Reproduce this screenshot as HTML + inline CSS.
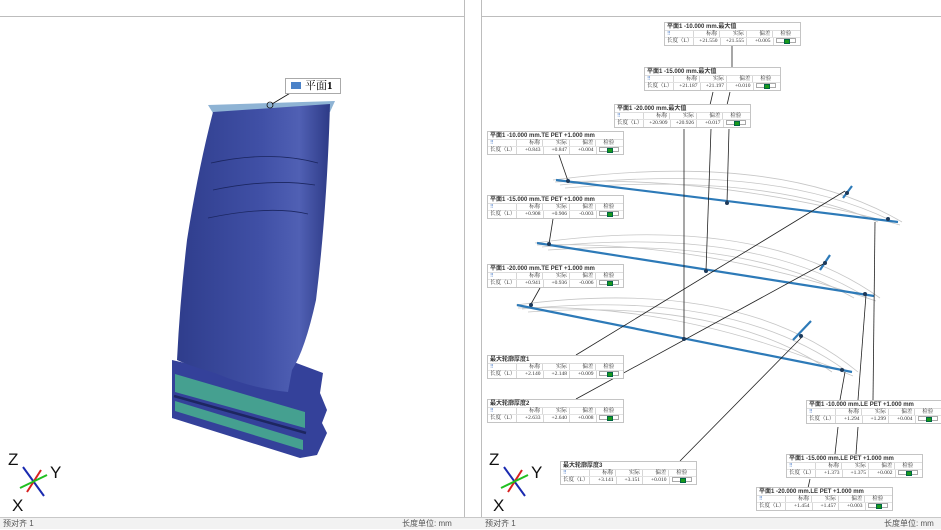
<!DOCTYPE html>
<html><head><meta charset="utf-8">
<style>
*{margin:0;padding:0;box-sizing:border-box}
body{width:941px;height:529px;background:#fff;position:relative;overflow:hidden;font-family:"Liberation Sans","Noto Sans CJK SC",sans-serif}
.vl{position:absolute;top:0;width:1px;height:517px;background:#bdbdbd}
.hl{position:absolute;top:16px;height:1px;background:#bdbdbd}
.status{position:absolute;left:0;top:517px;width:941px;height:12px;background:#f2f2f2;border-top:1px solid #c8c8c8;font-size:8px;color:#555;line-height:12px}
.t{position:absolute;width:137px;background:#fff;border:1px solid #c4c4c4;font-size:5.5px;color:#333;font-family:"Liberation Serif","Noto Serif CJK SC",serif}
.t .ti{height:8px;line-height:8px;font-weight:bold;font-size:6px;padding-left:2px;white-space:nowrap;font-family:"Liberation Sans","Noto Sans CJK SC",sans-serif;border-bottom:1px solid #ddd}
.t .r{display:flex;height:7px;line-height:7px;border-bottom:1px solid #e2e2e2}
.t .r:last-child{border-bottom:none}
.t .r span{border-right:1px solid #d6d6d6;text-align:right;padding-right:2px;white-space:nowrap}
.t .r span:first-child{width:29px;text-align:left;padding-left:2px}
.t .r span:nth-child(2),.t .r span:nth-child(3),.t .r span:nth-child(4){width:27px}
.t .r span:last-child{width:27px;border-right:none;text-align:center}
.ok{display:inline-block;width:20px;height:5px;border:1px solid #aaa;vertical-align:middle;position:relative}
.ok:after{content:"";position:absolute;left:7px;top:0;width:4px;height:3px;background:#1a9a1a;border:0.5px solid #064}
.ic{color:#4a7bc8;font-size:5px}
</style></head><body>
<div class="hl" style="left:0;width:465px"></div>
<div class="hl" style="left:481px;width:460px"></div>
<div class="vl" style="left:464px"></div>
<div class="vl" style="left:481px"></div>

<svg width="941" height="517" style="position:absolute;left:0;top:0">
<defs>
<linearGradient id="bg" x1="0" x2="1" y1="0" y2="0">
<stop offset="0" stop-color="#2f3d8c"/><stop offset="0.55" stop-color="#4050a6"/><stop offset="0.8" stop-color="#5060b4"/><stop offset="1" stop-color="#2d3a86"/></linearGradient>
</defs>
<!-- base -->
<path d="M172,360 L215,370 L283,358 L323,373 L320,393 L327,410 L322,423 L327,433 L317,455 L300,458 L172,418 Z" fill="#34419a"/>
<path d="M175,374 L305,412 L305,428 L175,392 Z" fill="#45a090"/>
<path d="M175,401 L303,440 L303,450 L175,411 Z" fill="#45a090"/>
<path d="M174,396 L306,433" stroke="#1d2660" stroke-width="2.5" fill="none"/>
<!-- blade -->
<polygon points="208,105 335,101 330,112 216,118" fill="#7aa6cc" opacity="0.85"/>
<path d="M213,112 L330,104 Q327,210 316,300 Q305,350 292,370 L288,392 Q250,388 215,373 Q190,366 177,360 Q180,300 187,240 Q198,170 213,112 Z" fill="url(#bg)"/>
<path d="M211,163 Q270,150 318,163 M213,190 Q270,178 315,185 M208,218 Q270,205 308,214" stroke="#1b2660" stroke-width="0.8" fill="none"/>
<circle cx="270" cy="105" r="3" fill="none" stroke="#111" stroke-width="0.8"/>
<line x1="272" y1="104" x2="292" y2="92" stroke="#111" stroke-width="0.8"/>
<!-- axes -->
<line x1="23" y1="467" x2="44" y2="496" stroke="#1a2ab0" stroke-width="2"/>
<line x1="27" y1="492" x2="41" y2="470" stroke="#d82020" stroke-width="2"/>
<line x1="20" y1="488" x2="47" y2="475" stroke="#20c020" stroke-width="2"/>
<line x1="504" y1="467" x2="525" y2="496" stroke="#1a2ab0" stroke-width="2"/>
<line x1="508" y1="492" x2="522" y2="470" stroke="#d82020" stroke-width="2"/>
<line x1="501" y1="488" x2="528" y2="475" stroke="#20c020" stroke-width="2"/>
<!-- arcs -->
<g stroke="#c6c6c6" fill="none" stroke-width="0.8">
<path d="M553,180 Q780,150 902,222"/><path d="M560,185 Q770,162 890,220"/><path d="M565,188 Q765,172 878,222"/><path d="M555,182 Q720,175 900,225"/>
<path d="M535,243 Q760,212 880,298"/><path d="M542,247 Q750,225 866,297"/><path d="M548,250 Q745,236 854,298"/><path d="M537,245 Q700,240 876,301"/>
<path d="M516,305 Q740,275 858,372"/><path d="M522,309 Q730,288 845,370"/><path d="M528,312 Q725,298 832,372"/><path d="M518,308 Q680,302 853,376"/>
</g>
<!-- blue lines -->
<g stroke="#2d7ab8" stroke-width="2.2">
<line x1="556" y1="180" x2="898" y2="222"/>
<line x1="537" y1="243" x2="874" y2="296"/>
<line x1="517" y1="305" x2="852" y2="372"/>
<line x1="843" y1="198" x2="852" y2="186"/><line x1="820" y1="270" x2="830" y2="255"/><line x1="793" y1="340" x2="811" y2="321"/>
</g>
<!-- leader lines -->
<g stroke="#222" stroke-width="0.8" fill="none">
<line x1="732" y1="46" x2="732" y2="68"/>
<line x1="713" y1="92" x2="710" y2="105"/><line x1="730" y1="92" x2="727" y2="105"/>
<line x1="684" y1="129" x2="684" y2="339"/><line x1="711" y1="129" x2="706" y2="271"/><line x1="729" y1="129" x2="727" y2="203"/>
<line x1="559" y1="155" x2="568" y2="181"/><line x1="553" y1="219" x2="549" y2="244"/><line x1="540" y1="288" x2="531" y2="304"/>
<line x1="576" y1="355" x2="845" y2="191"/><line x1="576" y1="399" x2="825" y2="263"/><line x1="680" y1="461" x2="802" y2="337"/>
<line x1="875" y1="222" x2="873" y2="400"/><line x1="866" y1="295" x2="858" y2="400"/><line x1="845" y1="372" x2="840" y2="400"/>
<line x1="838" y1="427" x2="835" y2="454"/><line x1="858" y1="427" x2="856" y2="454"/>
<line x1="810" y1="479" x2="808" y2="488"/>
</g>
<g fill="#1e3a5a">
<circle cx="568" cy="181" r="2"/><circle cx="549" cy="244" r="2"/><circle cx="531" cy="305" r="2"/>
<circle cx="727" cy="203" r="2"/><circle cx="706" cy="271" r="2"/><circle cx="684" cy="339" r="2"/>
<circle cx="847" cy="193" r="2"/><circle cx="825" cy="263" r="2"/><circle cx="801" cy="336" r="2"/>
<circle cx="888" cy="219" r="2"/><circle cx="865" cy="294" r="2"/><circle cx="842" cy="370" r="2"/>
</g>
<g font-family="Liberation Sans,sans-serif" font-size="17" fill="#111">
<text x="8" y="465">Z</text><text x="50" y="478">Y</text><text x="12" y="511">X</text>
<text x="489" y="465">Z</text><text x="531" y="478">Y</text><text x="493" y="511">X</text>
</g>
</svg>

<div style="position:absolute;left:285px;top:78px;width:56px;height:16px;border:1px solid #aaa;background:#fff;font-size:11px;line-height:14px;padding-left:5px;font-family:'Liberation Serif','Noto Serif CJK SC',serif"><span style="display:inline-block;width:10px;height:7px;background:#4b82c8;margin-right:4px"></span>平面<b>1</b></div>

<div class="t" style="left:664px;top:22px"><div class="ti">平面1 -10.000 mm.最大值</div><div class="r"><span class="ic">⠿</span><span>标称</span><span>实际</span><span>偏差</span><span>检验</span></div><div class="r"><span>长度（L）</span><span>+21.550</span><span>+21.555</span><span>+0.005</span><span><i class="ok"></i></span></div></div>
<div class="t" style="left:644px;top:67px"><div class="ti">平面1 -15.000 mm.最大值</div><div class="r"><span class="ic">⠿</span><span>标称</span><span>实际</span><span>偏差</span><span>检验</span></div><div class="r"><span>长度（L）</span><span>+21.187</span><span>+21.197</span><span>+0.010</span><span><i class="ok"></i></span></div></div>
<div class="t" style="left:614px;top:104px"><div class="ti">平面1 -20.000 mm.最大值</div><div class="r"><span class="ic">⠿</span><span>标称</span><span>实际</span><span>偏差</span><span>检验</span></div><div class="r"><span>长度（L）</span><span>+20.909</span><span>+20.926</span><span>+0.017</span><span><i class="ok"></i></span></div></div>
<div class="t" style="left:487px;top:131px"><div class="ti">平面1 -10.000 mm.TE PET +1.000 mm</div><div class="r"><span class="ic">⠿</span><span>标称</span><span>实际</span><span>偏差</span><span>检验</span></div><div class="r"><span>长度（L）</span><span>+0.843</span><span>+0.847</span><span>+0.004</span><span><i class="ok"></i></span></div></div>
<div class="t" style="left:487px;top:195px"><div class="ti">平面1 -15.000 mm.TE PET +1.000 mm</div><div class="r"><span class="ic">⠿</span><span>标称</span><span>实际</span><span>偏差</span><span>检验</span></div><div class="r"><span>长度（L）</span><span>+0.908</span><span>+0.906</span><span>-0.003</span><span><i class="ok"></i></span></div></div>
<div class="t" style="left:487px;top:264px"><div class="ti">平面1 -20.000 mm.TE PET +1.000 mm</div><div class="r"><span class="ic">⠿</span><span>标称</span><span>实际</span><span>偏差</span><span>检验</span></div><div class="r"><span>长度（L）</span><span>+0.941</span><span>+0.936</span><span>-0.006</span><span><i class="ok"></i></span></div></div>
<div class="t" style="left:487px;top:355px"><div class="ti">最大轮廓厚度1</div><div class="r"><span class="ic">⠿</span><span>标称</span><span>实际</span><span>偏差</span><span>检验</span></div><div class="r"><span>长度（L）</span><span>+2.140</span><span>+2.148</span><span>+0.009</span><span><i class="ok"></i></span></div></div>
<div class="t" style="left:487px;top:399px"><div class="ti">最大轮廓厚度2</div><div class="r"><span class="ic">⠿</span><span>标称</span><span>实际</span><span>偏差</span><span>检验</span></div><div class="r"><span>长度（L）</span><span>+2.633</span><span>+2.640</span><span>+0.008</span><span><i class="ok"></i></span></div></div>
<div class="t" style="left:560px;top:461px"><div class="ti">最大轮廓厚度3</div><div class="r"><span class="ic">⠿</span><span>标称</span><span>实际</span><span>偏差</span><span>检验</span></div><div class="r"><span>长度（L）</span><span>+3.141</span><span>+3.151</span><span>+0.010</span><span><i class="ok"></i></span></div></div>
<div class="t" style="left:806px;top:400px"><div class="ti">平面1 -10.000 mm.LE PET +1.000 mm</div><div class="r"><span class="ic">⠿</span><span>标称</span><span>实际</span><span>偏差</span><span>检验</span></div><div class="r"><span>长度（L）</span><span>+1.294</span><span>+1.299</span><span>+0.004</span><span><i class="ok"></i></span></div></div>
<div class="t" style="left:786px;top:454px"><div class="ti">平面1 -15.000 mm.LE PET +1.000 mm</div><div class="r"><span class="ic">⠿</span><span>标称</span><span>实际</span><span>偏差</span><span>检验</span></div><div class="r"><span>长度（L）</span><span>+1.373</span><span>+1.375</span><span>+0.002</span><span><i class="ok"></i></span></div></div>
<div class="t" style="left:756px;top:487px"><div class="ti">平面1 -20.000 mm.LE PET +1.000 mm</div><div class="r"><span class="ic">⠿</span><span>标称</span><span>实际</span><span>偏差</span><span>检验</span></div><div class="r"><span>长度（L）</span><span>+1.454</span><span>+1.457</span><span>+0.003</span><span><i class="ok"></i></span></div></div>

<div class="status">
<span style="position:absolute;left:3px">预对齐 1</span>
<span style="position:absolute;left:402px">长度单位: mm</span>
<span style="position:absolute;left:485px">预对齐 1</span>
<span style="position:absolute;left:884px">长度单位: mm</span>
</div>
</body></html>
